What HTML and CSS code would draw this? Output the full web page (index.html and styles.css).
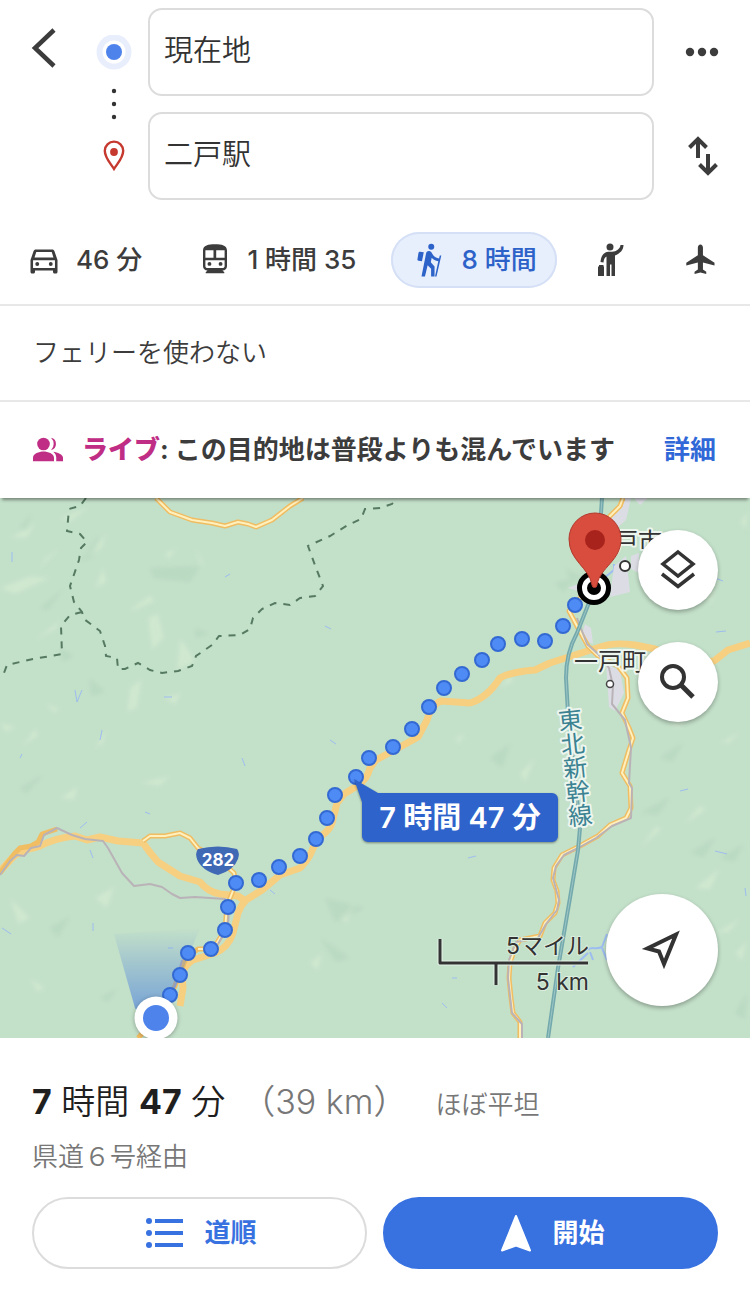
FILE: index.html
```html
<!DOCTYPE html>
<html lang="ja">
<head>
    <meta charset="UTF-8">
    <meta name="viewport" content="width=device-width, initial-scale=1.0">
    <title>二戸駅までの経路</title>
    <link rel="stylesheet" href="styles.css">
</head>
<body>
    <div class="page">
        <!-- Origin and destination -->
        <header class="search">
            <button class="icon-btn back" aria-label="戻る">
                <svg width="36" height="48" viewBox="0 0 36 48"><path d="M32 6 13 24l19 18" fill="none" stroke="#3c3c3c" stroke-width="4.5"/></svg>
            </button>
            <svg class="stops" width="36" height="138" viewBox="0 0 36 138">
                <circle cx="18" cy="17" r="17.5" fill="#e9eefc"/>
                <circle cx="18" cy="17" r="11.5" fill="#fff"/>
                <circle cx="18" cy="17" r="8" fill="#4f83ec"/>
                <g fill="#333"><circle cx="18" cy="56" r="2.2"/><circle cx="18" cy="69" r="2.2"/><circle cx="18" cy="82" r="2.2"/></g>
                <path d="M18 134c-3-5-9.2-11-9.2-18.200a9.200 9.200 0 0 1 18.400 0c0 7.200-6.200 13.200-9.200 18.200z" fill="#fff" stroke="#c5392f" stroke-width="2.4"/>
                <circle cx="18" cy="117" r="3.900" fill="#c5392f"/>
            </svg>
            <input class="place" type="text" aria-label="出発地" value="現在地">
            <input class="place" type="text" aria-label="目的地" value="二戸駅">
            <button class="icon-btn more" aria-label="その他">
                <svg width="36" height="36" viewBox="0 0 36 36" fill="#3c3c3c"><circle cx="6" cy="18" r="4.2"/><circle cx="18" cy="18" r="4.2"/><circle cx="30" cy="18" r="4.2"/></svg>
            </button>
            <button class="icon-btn swap" aria-label="入れ替え">
                <svg width="36" height="44" viewBox="0 0 36 44" fill="none" stroke="#3c3c3c" stroke-width="4"><path d="M14 24V6M5.500 13.500 14 5l8.500 8.500M24 20v18M15.500 30.500 24 39l8.500-8.500"/></svg>
            </button>
        </header>

        <!-- Travel modes -->
        <nav class="modes">
            <button class="mode">
                <svg width="36" height="36" viewBox="0 0 24 24"><path fill-rule="evenodd" d="M18.920 6.010C18.720 5.420 18.160 5 17.500 5h-11c-.66 0-1.210.42-1.420 1.010L3 12v8c0 .55.45 1 1 1h1c.55 0 1-.45 1-1v-1h12v1c0 .55.45 1 1 1h1c.55 0 1-.45 1-1v-8l-2.080-5.990zM6.850 6.700h10.290l1.180 3.600H5.670zM19.300 17.300H4.700v-5.200h14.600z"/><circle cx="7.500" cy="14.700" r="1.300"/><circle cx="16.500" cy="14.700" r="1.300"/></svg>
                46 分
            </button>
            <button class="mode">
                <svg width="36" height="36" viewBox="0 0 24 24"><path fill-rule="evenodd" d="M12 1.500c-4.400 0-8 .7-8 4.200v10.500C4 17.900 5.300 19 7 19l-1.200 1.200v.6h12.400v-.6L17 19c1.700 0 3-1.100 3-2.800V5.700c0-3.500-3.600-4.200-8-4.200zM5.600 5.500H11v5H5.600zM12.800 5.500h5.600v5h-5.600zM5.600 12.200h12.800v4c0 .8-.6 1.200-1.400 1.200H7c-.8 0-1.400-.4-1.400-1.200z"/><circle cx="8.300" cy="14.600" r="1.300"/><circle cx="15.700" cy="14.600" r="1.300"/></svg>
                1 時間 35
            </button>
            <button class="mode mode-active" aria-pressed="true">
                <svg width="36" height="36" viewBox="0 0 24 24"><path d="M13.500 5.100a2 2 0 1 0 0-4 2 2 0 0 0 0 4zM20.200 9h-1l-.5 2c-1.600-.3-3.200-1.100-4-2.400l-1-1.600c-.41-.65-1.110-1-1.840-1-.78 0-1.590.5-1.780 1.440L7 23h2.300l1.800-7.500 2.300 2.300V23h2.300v-6.700l-2.500-2.800.6-3c1 1.150 2.500 2 4.400 2.400L16 23h1zM7.300 12.900l-2.300-.4c-.5-.1-.8-.5-.7-1L5 7.200c.1-.5.6-.8 1.100-.7l2.400.4z"/></svg>
                8 時間
            </button>
            <button class="mode" aria-label="配車サービス">
                <svg width="36" height="36" viewBox="0 0 36 36"><circle cx="18" cy="5" r="3.500"/><path d="M28.500 3h3c0 5-3.500 8.500-8.500 10.500V34h-3.500V22.500H18V34h-3.500V14.500c-2 1-2.700 3-3 6L8.500 20c.4-5 2-8 5-9.500 1.500-.8 4-.8 6.500-.8 4.500-.2 8-2.700 8.500-6.700z"/><path d="M7 23h4.500v1.500H12V34H6V24.500h1z"/></svg>
            </button>
            <button class="mode" aria-label="飛行機">
                <svg width="36" height="36" viewBox="0 0 24 24"><path d="M21 15.700v-1.800l-7.700-5V3.700c0-.9-.7-2-1.700-2s-1.700 1.100-1.700 2v5.200l-7.700 5v1.800l7.700-2v4.600l-2.200 1.500v1.500l3.900-1 3.900 1v-1.500l-2.200-1.500v-4.600z"/></svg>
            </button>
        </nav>

        <div class="filter">フェリーを使わない</div>

        <div class="live">
            <svg width="36" height="36" viewBox="0 0 24 24" fill="#bf2e84"><circle cx="9" cy="8" r="4.2"/><path d="M2 19.500v-2.300c0-2.800 4-4.200 7-4.200s7 1.400 7 4.200v2.300zM14 12.100a5.600 5.600 0 0 0 0-8.200 4.200 4.200 0 0 1 0 8.200zM17.500 19.500v-2.300c0-1.700-.8-3-2-4 2.800.4 6.500 1.600 6.500 4v2.300z"/></svg>
            <p class="live-text"><strong class="live-tag">ライブ</strong>: この目的地は普段よりも混んでいます</p>
            <a class="live-more" href="#">詳細</a>
        </div>

        <!-- Map -->
        <main class="map">
            <svg class="map-canvas" viewBox="0 0 750 540">
                <defs>
                    <linearGradient id="heading" x1="0" y1="0" x2="0" y2="1">
                        <stop offset="0" stop-color="#4f83dc" stop-opacity="0"/>
                        <stop offset="1" stop-color="#4f83dc" stop-opacity=".75"/>
                    </linearGradient>
                    <filter id="soft"><feGaussianBlur stdDeviation="2"/></filter>
                </defs>
                <rect width="750" height="540" fill="#c3e0c9"/>

                <!-- terrain -->
                <g class="hill-light" filter="url(#soft)">
                    <path d="M35 142 60 122 55 132zM85 60l22-25-5 15zM130 112l20-15 5 6-22 10zM148 120l10-5 6 25-12 12zM180 140l10 14 5 10-18 8zM130 190l12-10-5 30-10 4zM165 200l16-5-6 12zM22 248l14-18 2 8zM95 250l12-20-4 16zM0 90l30-12 20 2-35 16zM10 40l25-15-8 15zM45 60l15-10-20 20z"/>
                    <path d="M60 20l30-12-20 16zM95 90l8-20 4 14zM195 50l6 18 3-2zM165 55l12-5-9 12zM0 225l16 4-10 5zM45 205l15 6-6 4zM60 300l18-12-4 14zM140 285l30-7-10 10zM10 400l20 20-12 6zM95 400l20-12-8 22zM30 480l15 10-8 4z"/>
                    <path d="M310 465l12-10-4 18zM340 420l15-15-8 20zM640 350l16-22 6 3zM685 325l15-18 6 5-18 12zM695 390l25-20-10 22zM715 435l26-15-12 14zM735 455l12-12-5 20zM670 225l22-12-14 18zM720 245l20-12-10 12zM500 190l10-14 3 8zM520 275l15-15-10 25zM455 240l10-4-6 10zM740 25l8-12-2 18zM705 100l10-10-4 16z"/>
                </g>
                <g class="hill-dark" filter="url(#soft)">
                    <path d="M80 65l20-30-8 24zM40 110l24-20-16 22zM150 70l50-2-10 16-36-4zM60 150l14 8-12 6zM20 30l12-16-6 18zM195 130l15 6-14 4zM90 180l15 14-14 4zM20 290l24-14-18 20zM50 430l20-12-12 22zM100 500l18-10-10 14z"/>
                    <path d="M325 400l40 10-30 14zM320 440l30 20-14 4zM555 85l20-5-12 14zM565 70l20 10-14 4zM640 315l30-16-12 18zM690 355l26-16-12 20zM720 360l24-14-10 18zM660 260l24-16-12 20zM490 260l20-14-8 24zM735 515l12-20-2 26zM675 180l40 16-20 4z"/>
                </g>
                <g class="stream">
                    <path d="M12 54v10M225 79l5-3M75 192l2 12M82 192l-5 12M100 242l2-10M20 260l2-4M164 199h8M330 242l6 4M325 128l6 3M80 330l7-6M90 352l3 8M2 430l9 6M93 425v8M168 450h5M270 392l5 4M145 314l5 2M242 260l3 8"/>
                    <path d="M715 80l8 3M716 134l10-1M680 293l8-2M715 353l12 3M745 390l1 8M442 505l5 5M468 360l8-2M452 480h5"/>
                    <path stroke-width="2" d="M588 452c3-4 8 0 14-3M602 449l5-13M602 450l5 12M588 455l-15 14M590 454l3 8M604 80l10-8v-6"/>
                </g>

                <!-- built-up areas -->
                <path fill="#dcdde4" d="M622 0h9l-5 22-9 8-8-8zM634 0h14l-8 7zM614 68l12-10 4 36-20 5zM631 58l8-3v20l-8-4zM568 90l12-5-2 8zM585 126l6 4 2 16-12-6zM606 165l14 8 4 22-9 18-6-4zM638 66l12-8 4 10-12 6z"/>

                <!-- prefecture borders -->
                <g class="border-line">
                    <path d="M86 0l-6 8-11 3-2 22 13 3 7 8-6 6-2 12-9 26 4 16 8 10 2 7 16 12 5 15 1 10 11 2 1 11h7l13-6 12 7 12 3 16-2 14-5 4-10 16-11 7-9 21-1 10-6 3-11 9-9 13-6 15 2 10-7 15-2 8-10-7-18-8-22 22-10 18-11 13-6 4-10 15-1 12-4 4-5"/>
                    <path d="M82 114l-12 3-9 11 1 28-17 3-12 2-13 3-13 3-3 8-4 4"/>
                </g>

                <!-- highways -->
                <g class="highway">
                    <path d="M0 373 15 357 25 352 40 348Q55 340 75 338L87 342 100 339 118 343 143 345Q150 355 158 364L180 378 200 384Q208 394 220 396L238 398 244 402"/>
                    <path d="M180 508 183 490 182 475Q186 466 193 462L215 455Q228 450 233 435L238 415Q241 407 246 402L262 392 280 377 300 370Q310 360 313 350L320 339Q330 332 332 325L337 305 344 296 357 288Q367 282 370 270L376 262 400 249 418 239 427 222Q432 206 441 203L470 205Q487 200 500 180 510 174 535 172L550 165 575 157 600 149Q613 144 635 147L655 151 690 166 714 163 728 152 750 145"/>
                </g>

                <!-- national roads -->
                <g class="road">
                    <path d="M156 0 170 14 192 22 212 25 225 28 238 24 248 26 256 29 272 22 290 8 303 0"/>
                    <path d="M143 343 150 338 165 338 180 335 190 340 198 350 222 364 234 375 236 385 227 408 225 432 213 451 198 451 186 460 175 488 157 520 138 540"/>
                    <path d="M0 375 15 355 20 350 31 348 38 344 42 336 57 331"/>
                    <path d="M623 0 620 8 609 19 605 40 597 80 569 113 578 130 588 148 597 157 618 168 627 180 628 200 622 215 629 230 633 240 629 252 622 275 630 288 631 310 626 320 610 327 598 338 578 349 562 357 554 370 553 382 557 393 558 405 555 415 545 425 540 438 520 442 515 450 510 465 509 480 511 500 513 515 520 524 520 540"/>
                </g>
                <g class="road-core">
                    <path d="M156 0 170 14 192 22 212 25 225 28 238 24 248 26 256 29 272 22 290 8 303 0"/>
                    <path d="M143 343 150 338 165 338 180 335 190 340 198 350 222 364 234 375 236 385 227 408 225 432 213 451 198 451"/>
                    <path d="M623 0 620 8 609 19 605 40 597 80 569 113 578 130 588 148 597 157 618 168 627 180 628 200 622 215 629 230 633 240 629 252 622 275 630 288 631 310 626 320 610 327 598 338 578 349 562 357 554 370 553 382 557 393 558 405 555 415 545 425 540 438 520 442 515 450 510 465 509 480 511 500 513 515 520 524 520 540"/>
                </g>

                <!-- railways -->
                <g class="rail">
                    <path d="M0 377 10 363 17 357 24 358 31 350 40 348 44 337 57 330 72 337 85 341 103 343 108 350 122 375 134 388 150 386 162 389 172 396 180 400 195 399 225 401 229 408 228 428 218 446M182 462 175 488 165 505"/>
                    <path d="M577 120 587 146 598 156 609 170 613 188 612 206 625 222 630 245 631 250 629 285 632 290 631 320 612 328 596 340 578 350 564 357 556 368 553 380 559 402 557 412 546 426 538 440 516 444 509 462 508 480 512 515 522 526 522 540"/>
                </g>
                <path class="shinkansen" d="M602 0 600 30Q600 70 594 92L577 135Q566 155 566 180L568 215 580 330 578 352 570 400 558 470 548 540"/>
                <path class="shinkansen-core" d="M602 0 600 30Q600 70 594 92L577 135Q566 155 566 180L568 215 580 330 578 352 570 400 558 470 548 540"/>

                <g class="map-label">
                    <text x="626" y="52">二戸市</text>
                    <text x="610" y="172">一戸町</text>
                    <text class="rail-label" transform="rotate(-6 567 210)" x="567" y="210">東北新幹線</text>
                </g>
                <circle cx="625" cy="68" r="5" fill="#fff" stroke="#333" stroke-width="2"/>
                <circle cx="610" cy="186" r="3.5" fill="#fff" stroke="#444" stroke-width="1.5"/>

                <path fill="#3f68b5" d="M198 351Q218 346 237 351 240 355 238 361 234 372 218 377 201 372 197 361 195 355 198 351z"/>
                <text class="shield-text" x="218" y="368">282</text>

                <!-- walking route -->
                <path fill="url(#heading)" d="M145 525 135 510 114 436 200 430 172 498z"/>
                <g class="route">
                    <circle cx="575" cy="107" r="7"/><circle cx="563" cy="128" r="7"/><circle cx="545" cy="143" r="7"/><circle cx="522" cy="141" r="7"/>
                    <circle cx="498" cy="146" r="7"/><circle cx="482" cy="162" r="7"/><circle cx="462" cy="176" r="7"/><circle cx="444" cy="190" r="7"/>
                    <circle cx="429" cy="209" r="7"/><circle cx="412" cy="231" r="7"/><circle cx="393" cy="249" r="7"/><circle cx="369" cy="260" r="7"/>
                    <circle cx="356" cy="279" r="7"/><circle cx="335" cy="297" r="7"/><circle cx="327" cy="320" r="7"/><circle cx="316" cy="341" r="7"/>
                    <circle cx="300" cy="358" r="7"/><circle cx="279" cy="369" r="7"/><circle cx="259" cy="382" r="7"/><circle cx="236" cy="385" r="7"/>
                    <circle cx="228" cy="409" r="7"/><circle cx="225" cy="432" r="7"/><circle cx="211" cy="451" r="7"/><circle cx="188" cy="455" r="7"/>
                    <circle cx="180" cy="477" r="7"/><circle cx="170" cy="497" r="7"/>
                </g>
                <circle class="here" cx="156" cy="520" r="21.5" fill="#fff"/>
                <circle cx="156" cy="520" r="13" fill="#4f83ec"/>

                <!-- destination -->
                <circle cx="594" cy="90" r="14.5" fill="#fff" stroke="#000" stroke-width="5"/>
                <circle cx="594" cy="90" r="7" fill="#000"/>
                <path fill="#d84d3d" stroke="#b23a2d" stroke-width="1" d="M592 87C589 69 569 63 569 41a26 26 0 0 1 52 0C621 63 600 69 597 87a2.500 2.500 0 0 1-5 0z"/>
                <circle cx="595" cy="42" r="10" fill="#a8231c"/>

                <!-- duration bubble -->
                <path class="bubble" d="M354 281 378 295H552a6 6 0 0 1 6 6V338a6 6 0 0 1-6 6H368a6 6 0 0 1-6-6V304z"/>
                <text class="bubble-text" x="460" y="330">7 時間 47 分</text>

                <!-- scale -->
                <g fill="none" stroke-linejoin="round">
                    <path stroke="#e6f2e8" stroke-width="5" d="M440 441V465H588M496 465V487"/>
                    <path stroke="#333" stroke-width="3" d="M440 441V465H588M496 465V487"/>
                </g>
                <g class="scale-text">
                    <text x="589" y="456">5マイル</text>
                    <text x="589" y="492">5 km</text>
                </g>
            </svg>

            <div class="map-tools">
                <button class="map-btn" aria-label="レイヤ">
                    <svg width="48" height="48" viewBox="0 0 48 48" fill="none" stroke="#333" stroke-width="3.5"><path d="M24 6 39 18 24 30 9 18zM8 28l16 12.500L40 28"/></svg>
                </button>
                <button class="map-btn" aria-label="検索">
                    <svg width="48" height="48" viewBox="0 0 48 48" fill="none" stroke="#333"><circle cx="19" cy="19" r="11" stroke-width="4"/><path stroke-width="5" d="M27.500 27.500 39 39"/></svg>
                </button>
            </div>
            <button class="map-btn locate" aria-label="現在地">
                <svg width="48" height="48" viewBox="0 0 48 48" fill="none" stroke="#333" stroke-width="4"><path d="M38 8.500 9.500 22.500 21 25.500 26 38z"/></svg>
            </button>
        </main>

        <!-- Route summary -->
        <section class="summary">
            <div class="summary-row">
                <h1 class="duration"><b>7</b> 時間 <b>47</b> 分</h1>
                <span class="distance">（39 km）</span>
                <span class="slope">ほぼ平坦</span>
            </div>
            <p class="via">県道６号経由</p>
            <div class="actions">
                <button class="action">
                    <svg width="38" height="32" viewBox="0 0 38 32" fill="#3871e0"><circle cx="3" cy="4" r="3"/><circle cx="3" cy="16" r="3"/><circle cx="3" cy="28" r="3"/><path d="M9 2h28v4H9zM9 14h28v4H9zM9 26h28v4H9z"/></svg>
                    道順
                </button>
                <button class="action action-primary">
                    <svg width="32" height="40" viewBox="0 0 32 40" fill="#fff" stroke="#fff" stroke-width="2" stroke-linejoin="round"><path d="M16 3 30 37.500 16 32.500 2 37.500z"/></svg>
                    開始
                </button>
            </div>
        </section>
    </div>
</body>
</html>
```
FILE: styles.css
```css
* {
    margin: 0;
    padding: 0;
    box-sizing: border-box;
}

body {
    font-family: Inter, "Noto Sans CJK JP", sans-serif;
    font-size: 26px;
    line-height: 40px;
    background: #fff;
    color: #3c3c3c;
}

button {
    font: inherit;
    color: inherit;
    background: none;
    border: none;
    cursor: pointer;
}

svg {
    display: block;
    flex-shrink: 0;
}

/* Origin and destination */
.search {
    display: grid;
    grid-template-columns: 80px 68px 1fr 96px;
    grid-template-rows: 88px 88px;
    gap: 16px 0;
    padding-top: 8px;
}

.icon-btn {
    display: flex;
    align-items: center;
    justify-content: center;
}

.back {
    grid-area: 1 / 1;
    padding-bottom: 8px;
}

.stops {
    grid-area: 1 / 2 / 3 / 3;
    align-self: center;
    margin-left: 16px;
}

.place {
    grid-column: 3;
    width: 100%;
    padding: 0 14px 2px;
    border: 2px solid #dcdcdc;
    border-radius: 14px;
    font: inherit;
    font-size: 29px;
    font-weight: 350;
    color: #333;
    background: #fff;
}

.more {
    grid-area: 1 / 4;
}

.swap {
    grid-area: 2 / 4;
}

/* Travel modes */
.modes {
    display: flex;
    gap: 15px;
    padding: 32px 6px 16px;
    border-bottom: 2px solid #e8e8e8;
}

.mode {
    display: flex;
    align-items: center;
    gap: 14px;
    height: 56px;
    padding: 0 20px;
    border-radius: 28px;
    font-weight: 500;
    white-space: nowrap;
    fill: #3c3c3c;
}

.mode-active {
    background: #e8effc;
    box-shadow: inset 0 0 0 2px #d5e0f6;
    color: #2d62c9;
    fill: #2d62c9;
}

.filter {
    padding: 27px 33px;
    border-bottom: 2px solid #e8e8e8;
    font-weight: 350;
}

.live {
    position: relative;
    z-index: 1;
    display: flex;
    align-items: center;
    gap: 16px;
    padding: 28px 34px 28px 30px;
    background: #fff;
    box-shadow: 0 4px 3px -2px rgba(0, 0, 0, 0.4);
    font-weight: 700;
}

.live-text {
    flex: 1;
}

.live-tag {
    color: #bf2e84;
}

.live-more {
    color: #3068d8;
    text-decoration: none;
}

/* Map */
.map {
    position: relative;
}

.map-canvas {
    width: 100%;
    height: auto;
}

.hill-light {
    fill: #d8edd4;
    opacity: 0.6;
}

.hill-dark {
    fill: #a9cdb3;
    opacity: 0.3;
}

.stream {
    fill: none;
    stroke: #9dbdf0;
    stroke-width: 1;
}

.border-line {
    fill: none;
    stroke: #557a61;
    stroke-width: 2;
    stroke-dasharray: 7 7;
}

.highway {
    fill: none;
    stroke: #f6cf80;
    stroke-width: 7;
    stroke-linejoin: round;
}

.road {
    fill: none;
    stroke: #f0bd62;
    stroke-width: 5;
    stroke-linejoin: round;
}

.road-core {
    fill: none;
    stroke: #fff0bd;
    stroke-width: 2;
    stroke-linejoin: round;
}

.rail {
    fill: none;
    stroke: #b9b3b8;
    stroke-width: 2;
    stroke-linejoin: round;
}

.shinkansen {
    fill: none;
    stroke: #73a9ad;
    stroke-width: 4;
}

.shinkansen-core {
    fill: none;
    stroke: #9cc5c4;
    stroke-width: 1;
}

.map-label {
    font-size: 24px;
    text-anchor: middle;
    fill: #333;
    stroke: #edf6ee;
    stroke-width: 4;
    stroke-linejoin: round;
    paint-order: stroke;
}

.rail-label {
    writing-mode: vertical-rl;
    text-anchor: start;
    fill: #3b8292;
}

.shield-text {
    font-size: 17px;
    font-weight: 700;
    text-anchor: middle;
    fill: #fff;
}

.route {
    fill: #4f8bf5;
    stroke: #3369d2;
    stroke-width: 2;
}

.here {
    filter: drop-shadow(0 1px 2px rgba(0, 0, 0, 0.3));
}

.bubble {
    fill: #2e63cb;
    filter: drop-shadow(0 1px 1px rgba(0, 0, 0, 0.4));
}

.bubble-text {
    font-size: 29px;
    font-weight: 600;
    text-anchor: middle;
    fill: #fff;
}

.scale-text {
    font-size: 23px;
    text-anchor: end;
    fill: #333;
    stroke: #dceedf;
    stroke-width: 2;
    paint-order: stroke;
}

.map-tools {
    position: absolute;
    top: 32px;
    right: 32px;
    display: flex;
    flex-direction: column;
    gap: 32px;
}

.map-btn {
    display: flex;
    align-items: center;
    justify-content: center;
    width: 80px;
    height: 80px;
    border-radius: 50%;
    background: #fff;
    box-shadow: 0 2px 4px rgba(0, 0, 0, 0.3);
}

.locate {
    position: absolute;
    right: 32px;
    bottom: 32px;
    width: 112px;
    height: 112px;
}

/* Route summary */
.summary {
    padding: 40px 32px 24px;
}

.summary-row {
    display: flex;
    align-items: baseline;
    font-size: 34px;
    line-height: 48px;
}

.duration {
    font-size: 34px;
    font-weight: 350;
    color: #1f1f1f;
}

.duration b {
    font-weight: 700;
}

.distance {
    margin-left: 16px;
    font-weight: 350;
    color: #777;
}

.slope {
    margin-left: 28px;
    font-size: 26px;
    font-weight: 350;
    color: #777;
}

.via {
    margin: 8px 0 20px;
    font-weight: 350;
    color: #777;
}

.actions {
    display: grid;
    grid-template-columns: 1fr 1fr;
    gap: 16px;
}

.action {
    display: flex;
    align-items: center;
    justify-content: center;
    gap: 20px;
    height: 72px;
    padding-left: 4px;
    border: 2px solid #dcdcdc;
    border-radius: 36px;
    font-weight: 700;
    color: #3871e0;
}

.action-primary {
    border-color: #3871e0;
    background: #3871e0;
    color: #fff;
}
```
